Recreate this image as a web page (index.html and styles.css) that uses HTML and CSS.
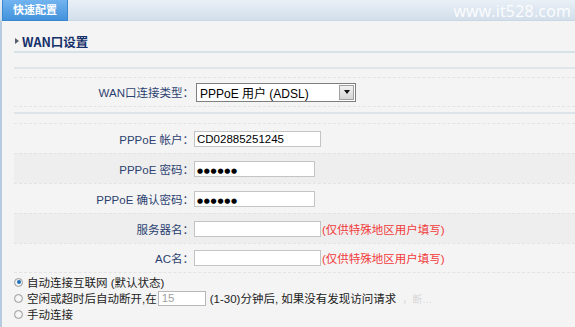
FILE: index.html
```html
<!DOCTYPE html>
<html>
<head>
<meta charset="utf-8">
<link rel="stylesheet" href="styles.css">
</head>
<body>
<div class="topbar">
  <div class="tab">快速配置</div>
  <div class="wm">www.it528.com</div>
</div>
<div class="content">
  <div class="heading"><span class="tri"></span>WAN口设置</div>
  <div class="line first"></div>
  <div class="row wan">
    <div class="label">WAN口连接类型：</div>
    <div class="select"><span class="sel-text">PPPoE 用户 (ADSL)</span><span class="sel-btn"><span class="arrow"></span></span></div>
  </div>
  <div class="line second"></div>
  <div class="rows">
    <div class="row">
      <div class="label">PPPoE 帐户：</div>
      <div class="field w127">CD02885251245</div>
    </div>
    <div class="row alt">
      <div class="label">PPPoE 密码：</div>
      <div class="field w121"><span class="dots">●●●●●●</span></div>
    </div>
    <div class="row">
      <div class="label">PPPoE 确认密码：</div>
      <div class="field w121"><span class="dots">●●●●●●</span></div>
    </div>
    <div class="row alt">
      <div class="label">服务器名：</div>
      <div class="field w127"></div>
      <span class="note">(仅供特殊地区用户填写)</span>
    </div>
    <div class="row last">
      <div class="label">AC名：</div>
      <div class="field w127"></div>
      <span class="note">(仅供特殊地区用户填写)</span>
    </div>
  </div>
  <div class="radios">
    <div class="opt"><span class="radio on"></span>自动连接互联网 (默认状态)</div>
    <div class="opt"><span class="radio"></span>空闲或超时后自动断开,在 <span class="mini">15</span> (1-30)分钟后, 如果没有发现访问请求<span class="ghost">，断…</span></div>
    <div class="opt"><span class="radio"></span>手动连接</div>
  </div>
</div>
</body>
</html>
```

FILE: styles.css
```css
html, body {
  margin: 0;
  padding: 0;
  background: #f4f4f4;
  font-family: "Liberation Sans", "Noto Sans CJK SC", sans-serif;
  font-size: 11.5px;
  overflow: hidden;
}

.topbar {
  height: 21px;
  display: flex;
  align-items: flex-start;
  background: linear-gradient(#e9f0f7, #d3dfeb);
  border-bottom: 1px solid #c9d6e3;
  box-sizing: border-box;
}

.tab {
  margin-left: 2px;
  width: 66px;
  height: 21px;
  box-sizing: border-box;
  background: linear-gradient(#72b4f0, #4392dc);
  border: 1px solid #3a86d0;
  border-top: none;
  color: #ffffff;
  font-family: "Noto Sans CJK SC", sans-serif;
  font-size: 11px;
  font-weight: bold;
  line-height: 19px;
  text-align: center;
}

.wm {
  margin-left: auto;
  margin-right: 4px;
  color: #ffffff;
  font-family: "Open Sans", "Liberation Sans", sans-serif;
  font-size: 16px;
  line-height: 22px;
  letter-spacing: 0.2px;
  opacity: 0.95;
}

.content {
  border-left: 2px solid #b7cbe0;
  padding-left: 12px;
  min-height: 306px;
}

.heading {
  display: flex;
  align-items: center;
  height: 32px;
  box-sizing: border-box;
  padding-top: 10px;
  border-bottom: 2px solid #d7e1e8;
  color: #15306a;
  font-family: "Noto Sans CJK SC", sans-serif;
  font-weight: bold;
  font-size: 12.5px;
}

.tri {
  width: 0;
  height: 0;
  border-left: 4px solid #555e6a;
  border-top: 3px solid transparent;
  border-bottom: 3px solid transparent;
  margin: 0 3px 0 1px;
}

.line.first {
  margin-top: 14px;
  height: 2px;
  background: #dfe6eb;
}

.line.second {
  margin-top: 5px;
  height: 2px;
  background: #dde5ea;
  margin-bottom: 9px;
}

.row {
  display: flex;
  align-items: center;
  height: 30px;
  border-top: 1px dashed #e3e3e3;
  box-sizing: border-box;
}

.row.wan {
  margin-top: 8px;
  height: 30px;
  border-bottom: 1px dashed #e3e3e3;
}

.row.alt {
  background: #eeeeee;
}

.row.last {
  border-bottom: 1px dashed #e3e3e3;
}

.label {
  width: 180px;
  text-align: right;
  color: #2c4270;
  white-space: nowrap;
}

.select {
  margin-left: 2px;
  width: 160px;
  height: 19px;
  box-sizing: border-box;
  border: 1px solid #7f7f7f;
  background: #fff;
  display: flex;
  align-items: center;
}

.sel-text {
  flex: 1;
  padding-left: 3px;
  color: #000;
  font-size: 12px;
}

.sel-btn {
  width: 15px;
  height: 15px;
  margin-right: 1px;
  box-sizing: border-box;
  background: linear-gradient(#f2f2f2, #d6d6d6);
  border: 1px solid #a0a0a0;
  display: flex;
  align-items: center;
  justify-content: center;
}

.arrow {
  width: 0;
  height: 0;
  border-top: 4px solid #111;
  border-left: 3.5px solid transparent;
  border-right: 3.5px solid transparent;
}

.field {
  height: 16px;
  box-sizing: border-box;
  border: 1px solid #c4c4c4;
  background: #fff;
  color: #000;
  font-size: 11.5px;
  line-height: 14px;
  padding-left: 2px;
  overflow: hidden;
}

.w127 { width: 127px; }
.w121 { width: 121px; }

.dots {
  font-family: "DejaVu Sans", sans-serif;
  font-size: 7px;
  letter-spacing: 0.7px;
  line-height: 14px;
}

.note {
  margin-left: 1px;
  color: #f23a3a;
}

.radios {
  padding-top: 1px;
}

.opt {
  display: flex;
  align-items: center;
  height: 16px;
  color: #222;
  white-space: nowrap;
}

.radio {
  width: 9px;
  height: 9px;
  box-sizing: border-box;
  border-radius: 50%;
  border: 1px solid #9a9a9a;
  background: radial-gradient(#fff, #e4e4e4);
  margin: 0 4px 0 0;
  position: relative;
}

.radio.on::after {
  content: "";
  position: absolute;
  left: 1.5px;
  top: 1.5px;
  width: 4px;
  height: 4px;
  border-radius: 50%;
  background: #1f6fb8;
}

.mini {
  display: inline-block;
  width: 48px;
  height: 15px;
  box-sizing: border-box;
  border: 1px solid #b8b8b8;
  background: #fff;
  color: #a0a0a0;
  padding-left: 3px;
  line-height: 13px;
  margin: 0 4px 0 1px;
}

.ghost {
  color: #d8d8d8;
  margin-left: 6px;
  font-size: 10px;
}
```
